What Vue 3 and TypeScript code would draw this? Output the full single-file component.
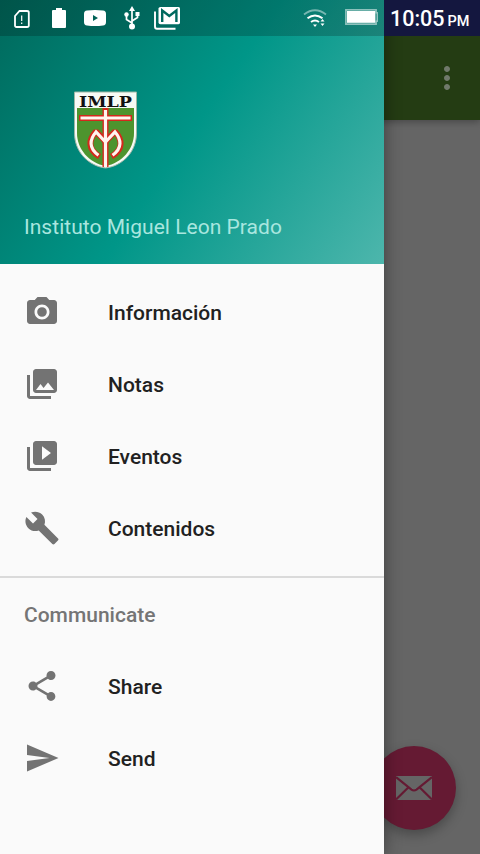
<template>
  <div class="screen">
    <div class="page">
      <header class="toolbar">
        <svg class="more-icon" width="36" height="36" viewBox="0 0 24 24">
          <path d="M12 8c1.1 0 2-.9 2-2s-.9-2-2-2-2 .9-2 2 .9 2 2 2zm0 2c-1.1 0-2 .9-2 2s.9 2 2 2 2-.9 2-2-.9-2-2-2zm0 6c-1.1 0-2 .9-2 2s.9 2 2 2 2-.9 2-2-.9-2-2-2z" fill="currentColor"/>
        </svg>
      </header>
      <button class="fab" aria-label="Mail">
        <svg width="36" height="24" viewBox="0 0 36 24">
          <path d="M0 0h36v24H0z" fill="#656565"/>
          <path d="M0 1l15.5 12.6q2.5 1.8 5 0L36 1M0 23.5l12-11.8M36 23.5L24 11.7" fill="none" stroke="#651a33" stroke-width="2.2"/>
        </svg>
      </button>
    </div>

    <aside class="drawer">
      <div class="drawer-header">
        <svg class="crest" width="64" height="78" viewBox="0 0 64 78">
          <path d="M1.5 1h62v41c0 19-14 33-31 35C15.5 75 1.5 61 1.5 42z" fill="#f7faf5" stroke="#9fb7a6" stroke-width="1"/>
          <path d="M4 17h57v25c0 16-12 30-28.5 33C16 72 4 58 4 42z" fill="#4d942e"/>
          <g fill="none" stroke="#d4281c" stroke-width="6">
            <path d="M6 27h53M32.5 17v59"/>
            <path d="M26.500 65.500c-12-7-11-17-3.500-25l9.500 10 9.500-10c7.500 8 8.500 18-3.500 25" stroke-linejoin="bevel"/>
          </g>
          <g fill="none" stroke="#fff5ef" stroke-width="3.200">
            <path d="M7.500 27h50M32.500 19v57"/>
            <path d="M25.500 64.200c-10-7-9-15.700-2.500-23.200l9.500 10 9.500-10c6.500 7.500 7.500 16.200-2.500 23.200"/>
          </g>
          <text x="6" y="15.7" textLength="53" lengthAdjust="spacingAndGlyphs">IMLP</text>
        </svg>
        <div class="school">Instituto Miguel Leon Prado</div>
      </div>

      <nav class="menu">
        <a v-for="item in mainItems" :key="item.label" class="menu-item">
          <svg class="menu-icon" width="36" height="36" viewBox="0 0 24 24">
            <path :d="item.icon" fill="currentColor"/>
          </svg>
          <span class="menu-label">{{ item.label }}</span>
        </a>
      </nav>

      <nav class="menu-group">
        <div class="subheader">Communicate</div>
        <a v-for="item in communicateItems" :key="item.label" class="menu-item">
          <svg class="menu-icon" width="36" height="36" viewBox="0 0 24 24">
            <path :d="item.icon" fill="currentColor"/>
          </svg>
          <span class="menu-label">{{ item.label }}</span>
        </a>
      </nav>
    </aside>

    <div class="status-bar">
      <div class="notifications">
        <!-- sim -->
        <svg class="n-sim" width="16" height="18" viewBox="0 0 16 18">
          <path d="M5.500 1H13q1.800 0 1.800 1.500v13q0 1.500-1.800 1.500H2.500Q1 17 1 15.500V6z" fill="none" stroke="#fff" stroke-width="1.800"/>
          <path d="M7.700 5.500v5.500M7.700 12.500v1.500" stroke="#fff" stroke-width="1.200"/>
        </svg>
        <!-- battery -->
        <svg class="n-battery" width="14" height="20" viewBox="0 0 14 20">
          <path d="M4 0h6v2h3q1 0 1 1v16q0 1-1 1H1q-1 0-1-1V3q0-1 1-1h3z" fill="#fff"/>
        </svg>
        <!-- youtube -->
        <svg class="n-video" width="22" height="16" viewBox="0 0 22 16">
          <path d="M3 .5Q11-.5 19 .5q3 .3 3 3.500v8q0 3.200-3 3.500-8 1-16 0-3-.3-3-3.500V4Q0 .8 3 .5zM9 5v6L14 8z" fill="#fff" fill-rule="evenodd"/>
        </svg>
        <!-- usb -->
        <svg class="n-usb" width="16" height="24" viewBox="0 0 16 24">
          <path d="M8 4v16M8 17l-5.500-3.500V9M8 15l5.500-3.500V8" fill="none" stroke="#fff" stroke-width="1.700"/>
          <path d="M8 0l3 5H5zM11.500 6h4v4h-4z" fill="#fff"/>
          <circle cx="2.500" cy="8.500" r="2.200" fill="#fff"/>
          <circle cx="8" cy="20.500" r="3" fill="#fff"/>
        </svg>
        <!-- gmail -->
        <svg class="n-mail" width="26" height="23" viewBox="0 0 26 23">
          <path d="M1 4.500v15q0 2.300 2 2.300h18.500" fill="none" stroke="#fff" stroke-width="1.900"/>
          <path d="M6.500 0h18q1.500 0 1.500 1.500v14q0 1.700-1.500 1.700h-18Q4.500 17.200 4.500 15.500v-14Q4.500 0 6.500 0z" fill="#fff"/>
          <path d="M8.200 15V3.500L15.300 9l7.100-5.500V15" fill="none" stroke="#00695e" stroke-width="2.400"/>
        </svg>
      </div>
      <div class="system">
        <svg class="wifi" width="24" height="19" viewBox="0 0 24 19">
          <path d="M1 5.500q11-8.500 22 0" fill="none" stroke="#fff" stroke-opacity=".45" stroke-width="1.800"/>
          <path d="M4.500 9.300q7.500-5.600 15 0M8 13q4-2.800 8 0" fill="none" stroke="#fff" stroke-width="2"/>
          <path d="M10 15.500h4L12 18zM17.500 12.500l2-2.500 2 2.500zM17.500 14.500h4l-2 2.500z" fill="#fff"/>
        </svg>
        <svg class="charge" width="33" height="16" viewBox="0 0 33 16">
          <path d="M.8.800h30.400v3h1.300v8.400h-1.300v3H.8z" fill="#fff" fill-opacity=".15" stroke="#fff" stroke-opacity=".5" stroke-width="1.500"/>
          <path d="M2 2h28.300v11.800H2z" fill="#fff"/>
        </svg>
        <div class="clock">10:05<small>PM</small></div>
      </div>
    </div>
  </div>
</template>

<script setup lang="ts">
interface MenuItem {
  label: string
  icon: string
}

const mainItems: MenuItem[] = [
  {
    label: 'Información',
    icon: 'M9 2L7.170 4H4c-1.100 0-2 .9-2 2v12c0 1.100.9 2 2 2h16c1.100 0 2-.9 2-2V6c0-1.100-.9-2-2-2h-3.170L15 2H9zm3 15c-2.760 0-5-2.240-5-5s2.240-5 5-5 5 2.240 5 5-2.240 5-5 5zm0-1.800a3.200 3.200 0 1 0 0-6.400 3.200 3.200 0 0 0 0 6.400z'
  },
  {
    label: 'Notas',
    icon: 'M22 16V4c0-1.100-.9-2-2-2H8c-1.100 0-2 .9-2 2v12c0 1.100.9 2 2 2h12c1.100 0 2-.9 2-2zm-11-4l2.030 2.710L16 11l4 5H8l3-4zM2 6v14c0 1.100.9 2 2 2h14v-2H4V6H2z'
  },
  {
    label: 'Eventos',
    icon: 'M4 6H2v14c0 1.100.9 2 2 2h14v-2H4V6zm16-4H8c-1.100 0-2 .9-2 2v12c0 1.100.9 2 2 2h12c1.100 0 2-.9 2-2V4c0-1.100-.9-2-2-2zm-8 12.500v-9l6 4.500-6 4.500z'
  },
  {
    label: 'Contenidos',
    icon: 'M22.700 19l-9.100-9.100c.9-2.300.4-5-1.500-6.900-2-2-5-2.400-7.400-1.300L9 6 6 9 1.600 4.700C.4 7.100.9 10.100 2.900 12.100c1.900 1.900 4.600 2.400 6.900 1.500l9.100 9.100c.4.4 1 .4 1.400 0l2.300-2.300c.5-.4.5-1.100.1-1.400z'
  }
]

const communicateItems: MenuItem[] = [
  {
    label: 'Share',
    icon: 'M18 16.080c-.76 0-1.440.3-1.960.77L8.910 12.700c.05-.23.09-.46.09-.7s-.04-.47-.09-.7l7.050-4.110c.54.5 1.250.81 2.040.81 1.660 0 3-1.340 3-3s-1.340-3-3-3-3 1.340-3 3c0 .24.04.47.09.7L8.040 9.810C7.500 9.310 6.790 9 6 9c-1.660 0-3 1.340-3 3s1.340 3 3 3c.79 0 1.500-.31 2.040-.81l7.120 4.160c-.05.21-.08.43-.08.65 0 1.610 1.310 2.920 2.920 2.920s2.920-1.310 2.920-2.920-1.310-2.920-2.920-2.920z'
  },
  {
    label: 'Send',
    icon: 'M2.010 21L23 12 2.010 3 2 10l15 2-15 2z'
  }
]
</script>

<style>
body {
  margin: 0;
}
</style>

<style scoped>
.screen {
  position: relative;
  width: 480px;
  height: 854px;
  overflow: hidden;
  background: #656565;
  font-family: Roboto, 'Noto Sans', sans-serif;
}

.page {
  height: 100%;
  padding-top: 36px;
  box-sizing: border-box;
}

.toolbar {
  display: flex;
  align-items: center;
  justify-content: flex-end;
  height: 84px;
  padding-right: 15px;
  box-sizing: border-box;
  background: #243c13;
  box-shadow: 0 2px 7px rgba(0, 0, 0, 0.3);
}

.more-icon {
  color: #70796b;
}

.fab {
  position: absolute;
  right: 24px;
  bottom: 24px;
  display: flex;
  align-items: center;
  justify-content: center;
  width: 84px;
  height: 84px;
  padding: 0;
  border: 0;
  border-radius: 50%;
  background: #651a33;
  box-shadow: 0 5px 12px rgba(0, 0, 0, 0.28);
}

.drawer {
  position: absolute;
  top: 0;
  left: 0;
  width: 384px;
  height: 100%;
  background: #fafafa;
  box-shadow: 0 0 16px rgba(0, 0, 0, 0.4);
}

.drawer-header {
  display: flex;
  flex-direction: column;
  height: 264px;
  padding: 91px 24px 0 73px;
  box-sizing: border-box;
  background: linear-gradient(124.5deg, #00695c 0%, #009688 50%, #4db6ac 100%);
}

.crest text {
  font-family: 'DejaVu Serif', serif;
  font-size: 14.5px;
  font-weight: 700;
  fill: #111;
}

.school {
  margin: 45px 0 0 -49px;
  color: #a9e6df;
  font-size: 21px;
  letter-spacing: 0.03px;
  line-height: 26px;
  white-space: nowrap;
}

.menu {
  padding: 12px 0;
}

.menu-item {
  display: flex;
  align-items: center;
  gap: 48px;
  height: 72px;
  padding: 0 24px;
  color: #212121;
  font-size: 21px;
  font-weight: 500;
}

.menu-label {
  padding-top: 2px;
}

.menu-icon {
  color: #737373;
}

.menu-group {
  border-top: 2px solid #dadada;
}

.subheader {
  height: 72px;
  padding: 0 24px;
  color: #757575;
  font-size: 21px;
  font-weight: 500;
  line-height: 74px;
}

.status-bar {
  position: absolute;
  top: 0;
  left: 0;
  display: flex;
  justify-content: space-between;
  width: 100%;
  height: 36px;
  background: linear-gradient(90deg, rgba(0, 0, 0, 0.2) 384px, #14173f 384px);
}

.notifications,
.system {
  display: flex;
  align-items: center;
}

.notifications {
  padding-left: 14px;
}

.n-sim {
  margin-top: 1px;
}

.n-battery {
  margin-left: 22px;
}

.n-video {
  margin-left: 18px;
}

.n-usb {
  margin-left: 18px;
}

.n-mail {
  margin-left: 14px;
}

.wifi {
  margin-right: 18px;
}

.charge {
  margin: -3px 12px 0 0;
}

.clock {
  width: 90px;
  padding-top: 4px;
  color: #fff;
  font-size: 21.5px;
  font-weight: 500;
  line-height: 37px;
  white-space: nowrap;
}

.clock small {
  margin-left: 3px;
  font-size: 14.5px;
}
</style>
